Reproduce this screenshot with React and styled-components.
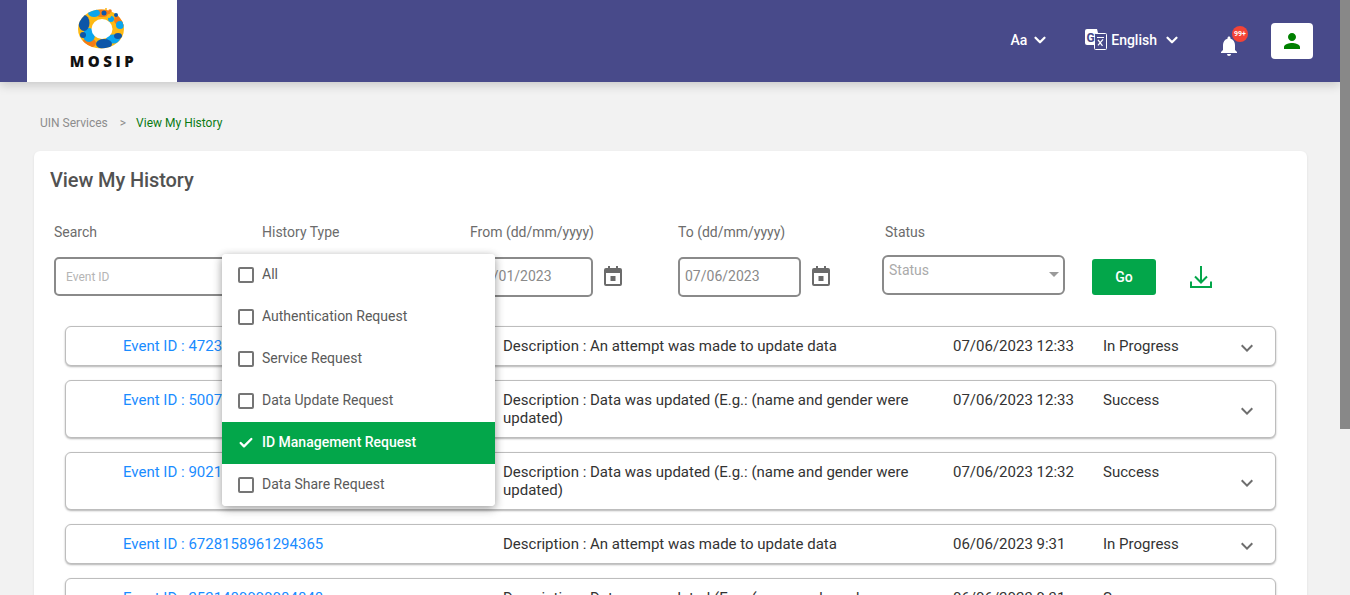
import React from 'react'
import styled, { createGlobalStyle } from 'styled-components'
import { MdNotifications, MdPerson, MdKeyboardArrowDown } from 'react-icons/md'
import { ChevronDown, Check } from 'lucide-react'

const GlobalStyle = createGlobalStyle`
  html, body {
    margin: 0;
    height: 100%;
    overflow: hidden;
  }
  body {
    font-family: Roboto, "Liberation Sans", sans-serif;
    background: #f2f2f2;
  }
`

const Shell = styled.div`
  display: flex;
  height: 100vh;
`

const Page = styled.div`
  flex: 1;
  min-width: 0;
  overflow: hidden;
  background: #f2f2f2;
`

const ScrollTrack = styled.div`
  width: 10px;
  flex: none;
  background: #f1f1f1;
`

const ScrollThumb = styled.div`
  height: 429px;
  background: #888;
`

const Header = styled.header`
  height: 82px;
  background: #484a8a;
  display: flex;
  align-items: center;
  justify-content: space-between;
  padding: 0 27px;
  box-shadow: 0 3px 10px rgba(0, 0, 0, 0.18);
`

const LogoBox = styled.div`
  width: 150px;
  height: 82px;
  background: white;
  display: flex;
  flex-direction: column;
  align-items: center;
  padding-top: 5px;
  box-sizing: border-box;
`

const LogoText = styled.div`
  font-family: "Open Sans", sans-serif;
  font-weight: 800;
  font-size: 15px;
  line-height: 14px;
  letter-spacing: 3.5px;
  margin: 3px 0 0 3px;
  color: #111;
`

const Nav = styled.nav`
  display: flex;
  align-items: center;
`

const NavItem = styled.div`
  display: flex;
  align-items: center;
  color: white;
  font-size: 14px;
  font-weight: 500;
  gap: ${p => p.$gap || 0}px;
  margin-right: ${p => p.$right || 0}px;
  margin-top: -3px;
`

const BellWrap = styled.div`
  position: relative;
  width: 24px;
  height: 24px;
  color: white;
  margin-right: 30px;
  margin-top: 10px;
  font-size: 24px;
`

const Badge = styled.span`
  position: absolute;
  top: -8px;
  left: 15px;
  width: 16px;
  height: 16px;
  border-radius: 50%;
  background: #f44336;
  color: white;
  font-size: 7px;
  font-weight: 700;
  line-height: 16px;
  text-align: center;
`

const UserButton = styled.div`
  width: 42px;
  height: 36px;
  background: white;
  border-radius: 4px;
  display: flex;
  align-items: center;
  justify-content: center;
  color: #008000;
  font-size: 24px;
`

const Breadcrumb = styled.div`
  display: flex;
  font-size: 12px;
  line-height: 16px;
  color: #8d8d8d;
  padding: 33px 0 20px 40px;
`

const Crumb = styled.span`
  margin-right: ${p => p.$right || 0}px;
  color: ${p => (p.$active ? '#0b7a12' : '#8d8d8d')};
`

const Card = styled.main`
  margin: 0 33px 0 34px;
  background: white;
  border-radius: 6px;
  box-shadow: 0 1px 3px rgba(0, 0, 0, 0.08);
  padding: 17px 0 24px;
`

const Title = styled.h1`
  margin: 0 0 31px 16px;
  font-size: 20px;
  line-height: 24px;
  font-weight: 500;
  letter-spacing: -0.1px;
  color: #525252;
`

const Filters = styled.div`
  display: flex;
  align-items: flex-start;
  padding-left: 20px;
`

const Field = styled.div`
  position: relative;
  width: ${p => p.$width || 208}px;
  flex: none;
`

const Label = styled.div`
  font-size: 14px;
  line-height: 18px;
  color: #6c6c6c;
  margin-bottom: 16px;
`

const TextBox = styled.div`
  box-sizing: border-box;
  width: ${p => p.$width}px;
  height: ${p => p.$height || 40}px;
  border: 2px solid #8a8a8a;
  border-radius: 5px;
  display: flex;
  align-items: center;
  padding: 0 0 ${p => p.$lift || 0}px ${p => p.$pad}px;
  font-size: ${p => p.$size || 14}px;
  color: ${p => p.$color || '#8a8a8a'};
`

const DateRow = styled.div`
  display: flex;
  align-items: center;
  gap: 11px;
`

const CalendarSlot = styled.span`
  display: flex;
  margin-top: -2px;
`

const StatusBox = styled.div`
  box-sizing: border-box;
  width: 183px;
  height: 40px;
  margin: -2px 0 0 -3px;
  border: 2px solid #8a8a8a;
  border-radius: 6px;
  display: flex;
  justify-content: space-between;
  padding: 4px 4px 0 5px;
  font-size: 14px;
  line-height: 18px;
  color: #aaa;
`

const Caret = styled.span`
  width: 0;
  height: 0;
  margin-top: 11px;
  border-left: 5px solid transparent;
  border-right: 5px solid transparent;
  border-top: 5px solid #9a9a9a;
`

const GoButton = styled.button`
  width: 64px;
  height: 36px;
  margin: 36px 0 0 27px;
  flex: none;
  border: 0;
  border-radius: 3px;
  background: #03a64a;
  color: white;
  font-family: inherit;
  font-size: 14px;
  font-weight: 500;
`

const DownloadWrap = styled.div`
  margin: 43px 0 0 34px;
  height: 22px;
`

const Menu = styled.div`
  position: absolute;
  top: 31px;
  left: -40px;
  z-index: 5;
  width: 273px;
  background: white;
  border-radius: 4px;
  overflow: hidden;
  box-shadow: 0 2px 8px rgba(0, 0, 0, 0.3), 0 4px 12px rgba(0, 0, 0, 0.12);
`

const Option = styled.div`
  height: 42px;
  display: flex;
  align-items: center;
  gap: 8px;
  padding-left: 16px;
  font-size: 14px;
  font-weight: ${p => (p.$selected ? 500 : 400)};
  color: ${p => (p.$selected ? 'white' : '#5a5a5a')};
  background: ${p => (p.$selected ? '#03a64a' : 'white')};
`

const OptionText = styled.span`
  margin-top: -2px;
`

const Box = styled.span`
  box-sizing: border-box;
  width: 16px;
  height: 16px;
  border: 2px solid #757575;
  border-radius: 2px;
`

const CheckSlot = styled.span`
  width: 16px;
  height: 16px;
  display: flex;
  align-items: center;
  justify-content: center;
`

const List = styled.div`
  display: flex;
  flex-direction: column;
  gap: 14px;
  width: 1211px;
  margin: 29px 0 0 31px;
`

const Row = styled.div`
  box-sizing: border-box;
  display: grid;
  grid-template-columns: 380px 450px 150px 1fr 30px;
  padding: 10px 13px 10px 57px;
  border: 1px solid #bdbdbd;
  border-radius: 6px;
  box-shadow: 0 1px 2px rgba(0, 0, 0, 0.3);
  background: white;
  font-size: 15px;
  line-height: 18px;
  color: #333;
`

const EventId = styled.div`
  color: #1a8cff;
`

const Description = styled.div`
  width: 420px;
`

const Arrow = styled.div`
  align-self: center;
  height: 18px;
  display: flex;
  align-items: center;
  justify-content: center;
  color: #6e6e6e;
  font-size: 24px;
  transform: translateY(2px);
`

const TranslateIcon = () => (
  <svg width="22" height="21" viewBox="0 0 22 21">
    <path d="M2 0h10l4 16H2a2 2 0 0 1-2-2V2a2 2 0 0 1 2-2z" fill="white" />
    <rect x="9.500" y="4.500" width="12" height="16" rx="1" fill="#484a8a" stroke="white" />
    <path d="M12 8h7v1h-7zM12.500 16l5-6 1 .8-5 6zM13.500 10.500l4.500 6-1 .7-4.500-6z" fill="white" />
    <text x="1.500" y="12.500" fontFamily="Roboto, sans-serif" fontWeight="700" fontSize="12" fill="#484a8a">G</text>
  </svg>
)

const CalendarIcon = () => (
  <svg width="18" height="20" viewBox="0 0 18 20">
    <path d="M4 0h2v2h6V0h2v2h2a2 2 0 0 1 2 2v14a2 2 0 0 1-2 2H2a2 2 0 0 1-2-2V4a2 2 0 0 1 2-2h2zM2 7v11h14V7z" fill="#6b6b6b" />
    <rect x="6.500" y="10" width="5" height="5" fill="#6b6b6b" />
  </svg>
)

const DownloadIcon = () => (
  <svg width="22" height="22" viewBox="0 0 22 22" fill="none" stroke="#03a64a" strokeWidth="2" style={{ display: 'block' }}>
    <path d="M11 0v16M5 10.500l6 6 6-6M1 15.500V21h20v-5.500" />
  </svg>
)

const Logo = () => (
  <svg width="60" height="46" viewBox="0 0 60 46">
    <defs>
      <clipPath id="ring">
        <ellipse cx="29" cy="24" rx="23" ry="19.500" />
      </clipPath>
    </defs>
    <g clipPath="url(#ring)">
      <rect width="60" height="46" fill="#fdb913" />
      <ellipse cx="49" cy="15" rx="7" ry="6" fill="#f57c14" />
      <ellipse cx="17" cy="38" rx="7" ry="5" fill="#f57c14" />
      <ellipse cx="30" cy="8" rx="8" ry="4" fill="#f57c14" />
      <ellipse cx="22" cy="8" rx="6" ry="4" fill="#0aa5ee" />
      <ellipse cx="17" cy="30" rx="6" ry="7" fill="#0aa5ee" />
      <ellipse cx="41" cy="34" rx="7" ry="4.500" fill="#0aa5ee" />
      <circle cx="48" cy="20" r="4" fill="#0aa5ee" />
      <ellipse cx="12" cy="18" rx="5.500" ry="8" fill="#0d56a8" />
      <ellipse cx="32" cy="39" rx="8" ry="5" fill="#0d56a8" />
      <ellipse cx="46" cy="31" rx="4" ry="3" fill="#0d56a8" />
      <circle cx="11" cy="30" r="3" fill="#0d56a8" />
    </g>
    <ellipse cx="30" cy="24" rx="10.500" ry="10" fill="white" />
    <circle cx="39" cy="14" r="3" fill="#0aa5ee" />
    <circle cx="37" cy="11" r="2" fill="#fdb913" />
    <circle cx="34" cy="4" r="1" fill="#fdb913" />
    <circle cx="38" cy="6" r="1.800" fill="#f57c14" />
    <circle cx="32" cy="8" r="2.500" fill="#0d56a8" />
    <circle cx="44" cy="10" r="2" fill="#0d56a8" />
  </svg>
)

const options = [
  { label: 'All' },
  { label: 'Authentication Request' },
  { label: 'Service Request' },
  { label: 'Data Update Request' },
  { label: 'ID Management Request', selected: true },
  { label: 'Data Share Request' },
]

const attempt = 'Description : An attempt was made to update data'
const updated = 'Description : Data was updated (E.g.: (name and gender were updated)'

const events = [
  { id: '4723158961294365', text: attempt, date: '07/06/2023 12:33', status: 'In Progress' },
  { id: '5007148999984848', text: updated, date: '07/06/2023 12:33', status: 'Success' },
  { id: '9021158961294365', text: updated, date: '07/06/2023 12:32', status: 'Success' },
  { id: '6728158961294365', text: attempt, date: '06/06/2023 9:31', status: 'In Progress' },
  { id: '2521489999984848', text: updated, date: '06/06/2023 9:31', status: 'Success' },
]

const App = () => {
  return (
    <Shell>
      <GlobalStyle />
      <Page>
        <Header>
          <LogoBox>
            <Logo />
            <LogoText>MOSIP</LogoText>
          </LogoBox>
          <Nav>
            <NavItem $gap={4} $right={36}>
              Aa <ChevronDown size={18} strokeWidth={3} />
            </NavItem>
            <NavItem $gap={4} $right={36}>
              <TranslateIcon />
              English
              <ChevronDown size={18} strokeWidth={3} style={{ marginLeft: 2 }} />
            </NavItem>
            <BellWrap>
              <MdNotifications />
              <Badge>99+</Badge>
            </BellWrap>
            <UserButton>
              <MdPerson />
            </UserButton>
          </Nav>
        </Header>

        <Breadcrumb>
          <Crumb $right={12}>UIN Services</Crumb>
          <Crumb $right={10}>&gt;</Crumb>
          <Crumb $active>View My History</Crumb>
        </Breadcrumb>

        <Card>
          <Title>View My History</Title>

          <Filters>
            <Field>
              <Label>Search</Label>
              <TextBox $width={190} $height={39} $pad={10} $size={12} $color="#b5b5b5">Event ID</TextBox>
            </Field>
            <Field>
              <Label>History Type</Label>
              <Menu>
                {options.map(o => (
                  <Option key={o.label} $selected={o.selected}>
                    {o.selected ? <CheckSlot><Check size={16} strokeWidth={3.5} /></CheckSlot> : <Box />}
                    <OptionText>{o.label}</OptionText>
                  </Option>
                ))}
              </Menu>
            </Field>
            <Field>
              <Label>From (dd/mm/yyyy)</Label>
              <DateRow>
                <TextBox $width={123} $pad={5} $lift={3}>07/01/2023</TextBox>
                <CalendarSlot><CalendarIcon /></CalendarSlot>
              </DateRow>
            </Field>
            <Field $width={207}>
              <Label>To (dd/mm/yyyy)</Label>
              <DateRow>
                <TextBox $width={123} $pad={5} $lift={3}>07/06/2023</TextBox>
                <CalendarSlot><CalendarIcon /></CalendarSlot>
              </DateRow>
            </Field>
            <Field $width={180}>
              <Label>Status</Label>
              <StatusBox>
                Status
                <Caret />
              </StatusBox>
            </Field>
            <GoButton>Go</GoButton>
            <DownloadWrap>
              <DownloadIcon />
            </DownloadWrap>
          </Filters>

          <List>
            {events.map(e => (
              <Row key={e.id}>
                <EventId>Event ID : {e.id}</EventId>
                <Description>{e.text}</Description>
                <div>{e.date}</div>
                <div>{e.status}</div>
                <Arrow><MdKeyboardArrowDown /></Arrow>
              </Row>
            ))}
          </List>
        </Card>
      </Page>
      <ScrollTrack>
        <ScrollThumb />
      </ScrollTrack>
    </Shell>
  )
}

export default App
